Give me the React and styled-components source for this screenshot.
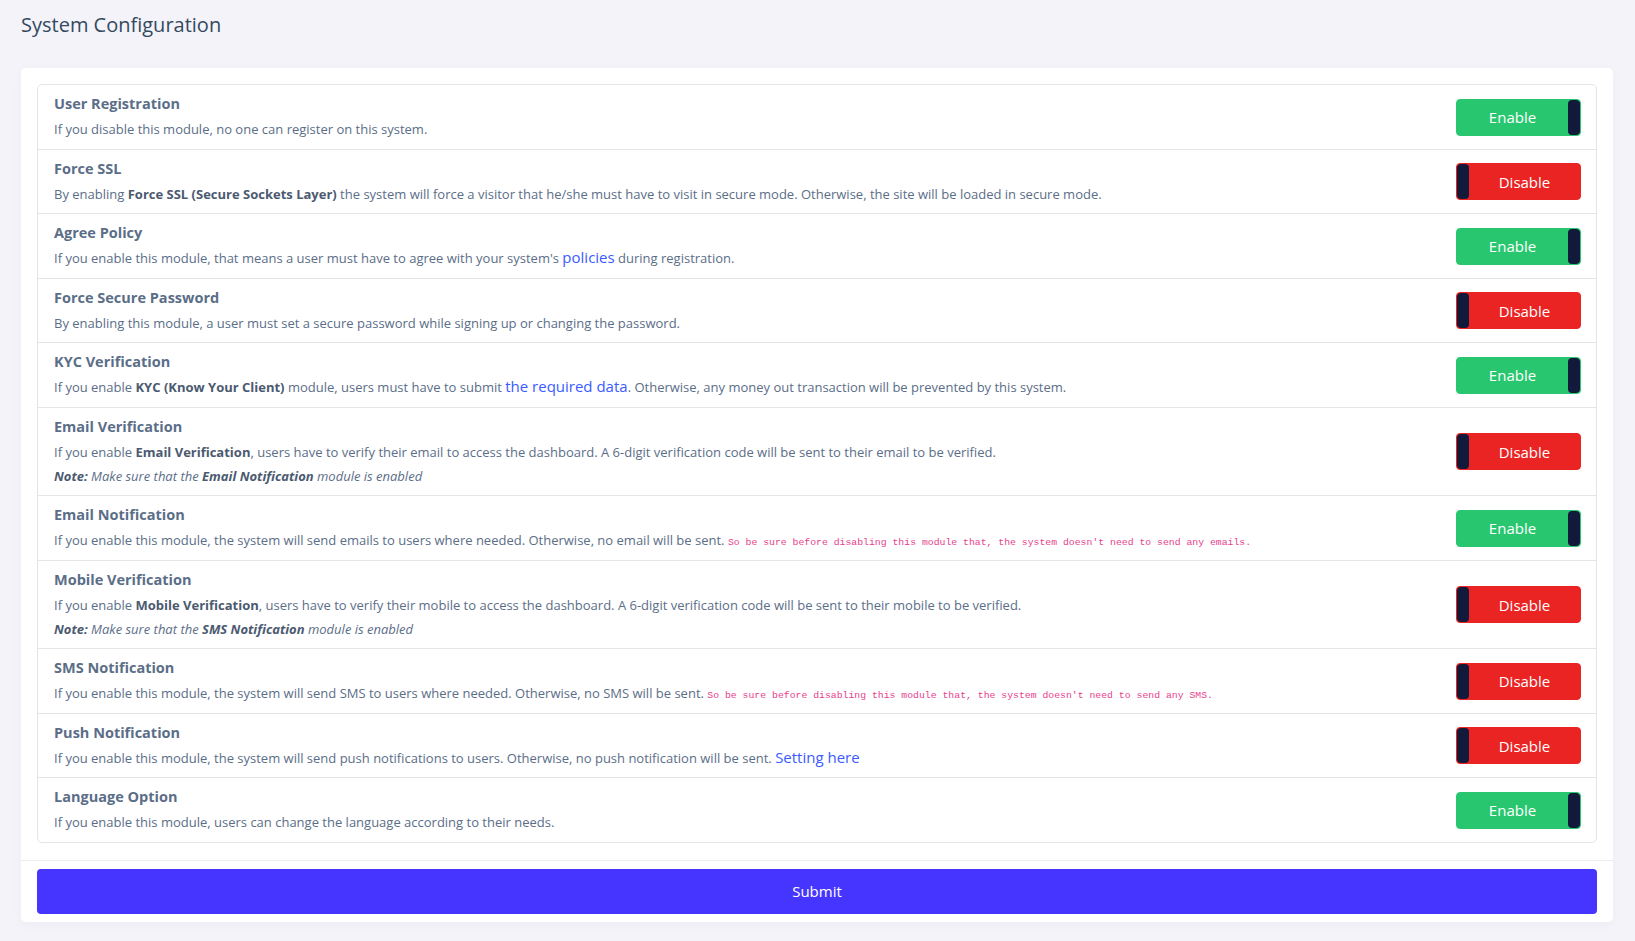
import styled, { createGlobalStyle } from "styled-components"
import { useState } from 'react'

const GlobalStyle = createGlobalStyle`
    body {
        margin: 0;
        background: #f3f3f9;
        font-family: 'Open Sans', 'Liberation Sans', sans-serif;
        color: #5b6e88;
    }
    * {
        box-sizing: border-box;
    }
`

// montado na renderização, depois que os styled components já existem
function getSettings(){
    return [
        {
            key: 'registration',
            title: 'User Registration',
            on: true,
            desc: <>If you disable this module, no one can register on this system.</>
        },
        {
            key: 'force_ssl',
            title: 'Force SSL',
            on: false,
            desc: <>By enabling <b>Force SSL (Secure Sockets Layer)</b> the system will force a visitor that he/she must have to visit in secure mode. Otherwise, the site will be loaded in secure mode.</>
        },
        {
            key: 'agree',
            title: 'Agree Policy',
            on: true,
            desc: <>If you enable this module, that means a user must have to agree with your system's <Link href="#">policies</Link> during registration.</>
        },
        {
            key: 'secure_password',
            title: 'Force Secure Password',
            on: false,
            desc: <>By enabling this module, a user must set a secure password while signing up or changing the password.</>
        },
        {
            key: 'kv',
            title: 'KYC Verification',
            on: true,
            desc: <>If you enable <b>KYC (Know Your Client)</b> module, users must have to submit <Link href="#">the required data</Link>. Otherwise, any money out transaction will be prevented by this system.</>
        },
        {
            key: 'ev',
            title: 'Email Verification',
            on: false,
            desc: <>If you enable <b>Email Verification</b>, users have to verify their email to access the dashboard. A 6-digit verification code will be sent to their email to be verified.</>,
            note: <><b>Note:</b> Make sure that the <b>Email Notification</b> module is enabled</>
        },
        {
            key: 'en',
            title: 'Email Notification',
            on: true,
            desc: <>If you enable this module, the system will send emails to users where needed. Otherwise, no email will be sent. <Code>So be sure before disabling this module that, the system doesn't need to send any emails.</Code></>
        },
        {
            key: 'sv',
            title: 'Mobile Verification',
            on: false,
            desc: <>If you enable <b>Mobile Verification</b>, users have to verify their mobile to access the dashboard. A 6-digit verification code will be sent to their mobile to be verified.</>,
            note: <><b>Note:</b> Make sure that the <b>SMS Notification</b> module is enabled</>
        },
        {
            key: 'sn',
            title: 'SMS Notification',
            on: false,
            desc: <>If you enable this module, the system will send SMS to users where needed. Otherwise, no SMS will be sent. <Code>So be sure before disabling this module that, the system doesn't need to send any SMS.</Code></>
        },
        {
            key: 'pn',
            title: 'Push Notification',
            on: false,
            desc: <>If you enable this module, the system will send push notifications to users. Otherwise, no push notification will be sent. <Link href="#">Setting here</Link></>
        },
        {
            key: 'multi_language',
            title: 'Language Option',
            on: true,
            desc: <>If you enable this module, users can change the language according to their needs.</>
        },
    ]
}

export default function App(){
    const settings = getSettings()
    const [valores, setValores] = useState(
        () => Object.fromEntries(settings.map(s => [s.key, s.on]))
    )

    function alternar(key){
        setValores({ ...valores, [key]: !valores[key] })
    }

    return (
    <>
    <GlobalStyle />
    <Pagina>
        <TituloPagina>System Configuration</TituloPagina>
        <Card>
            <CorpoCard>
                <Lista>
                    {settings.map(s => (
                        <Linha key={s.key}>
                            <Info>
                                <NomeModulo>{s.title}</NomeModulo>
                                <Descricao>{s.desc}</Descricao>
                                {s.note && <Nota>{s.note}</Nota>}
                            </Info>
                            <Toggle type="button" $on={valores[s.key]} onClick={() => alternar(s.key)}>
                                <span>{valores[s.key] ? 'Enable' : 'Disable'}</span>
                                <Alca />
                            </Toggle>
                        </Linha>
                    ))}
                </Lista>
            </CorpoCard>
            <RodapeCard>
                <BotaoSubmit type="submit">Submit</BotaoSubmit>
            </RodapeCard>
        </Card>
    </Pagina>
    </>
    )
}

const Pagina = styled.div`
    padding: 13px 22px 21px 21px;
`

const TituloPagina = styled.h1`
    margin: 0 0 31px 0;
    font-size: 20px;
    line-height: 24px;
    font-weight: 500;
    color: #34495e;
`

const Card = styled.div`
    background: #ffffff;
    border-radius: 5px;
    box-shadow: 0 3px 12px rgba(18, 38, 63, 0.03);
`

const CorpoCard = styled.div`
    padding: 16px 16px 17px 16px;
`

const Lista = styled.ul`
    list-style: none;
    margin: 0;
    padding: 0;
    border: 1px solid #e5e5e5;
    border-radius: 5px;
`

const Linha = styled.li`
    display: flex;
    align-items: center;
    justify-content: space-between;
    gap: 24px;
    padding: 10px 15px 9.5px 16px;
    border-bottom: 1px solid #e5e5e5;
    &:last-child {
        border-bottom: none;
    }
`

const Info = styled.div`
    display: flex;
    flex-direction: column;
    min-width: 0;
`

const NomeModulo = styled.p`
    margin: 0;
    font-size: 14.5px;
    line-height: 18px;
    font-weight: 700;
    color: #5b6e88;
`

const Descricao = styled.p`
    margin: 6px 0 0 0;
    font-size: 13px;
    line-height: 20px;
    color: #5b6e88;
    b {
        font-weight: 700;
        color: #4b5a70;
    }
`

const Nota = styled.p`
    margin: 4px 0 0 0;
    font-size: 13px;
    line-height: 20px;
    font-style: italic;
    color: #5b6e88;
    b {
        font-weight: 700;
        color: #4b5a70;
    }
`

const Link = styled.a`
    font-size: 15px;
    line-height: 1;
    color: #3b5bff;
    text-decoration: none;
`

const Code = styled.code`
    font-family: 'Liberation Mono', 'DejaVu Sans Mono', monospace;
    font-size: 9.8px;
    line-height: 1;
    color: #e83e8c;
`

const Toggle = styled.button`
    flex-shrink: 0;
    width: 125px;
    height: 37px;
    padding: 0;
    border: 1px solid ${p => p.$on ? '#28c76f' : '#ea2323'};
    border-radius: 4px;
    background: ${p => p.$on ? '#28c76f' : '#ea2323'};
    display: flex;
    flex-direction: ${p => p.$on ? 'row' : 'row-reverse'};
    align-items: stretch;
    cursor: pointer;
    overflow: hidden;
    span {
        flex: 1;
        display: flex;
        align-items: center;
        justify-content: center;
        font-family: 'Open Sans', 'Liberation Sans', sans-serif;
        font-size: 15px;
        color: #ffffff;
    }
`

const Alca = styled.i`
    width: 12px;
    background: #121a3b;
    border-radius: 4px;
`

const RodapeCard = styled.div`
    border-top: 1px solid #ececec;
    padding: 8px 16px 8px 16px;
`

const BotaoSubmit = styled.button`
    width: 100%;
    height: 45px;
    border: none;
    border-radius: 4px;
    background: #4634ff;
    color: #ffffff;
    font-family: 'Open Sans', 'Liberation Sans', sans-serif;
    font-size: 15px;
    font-weight: 500;
    cursor: pointer;
`
